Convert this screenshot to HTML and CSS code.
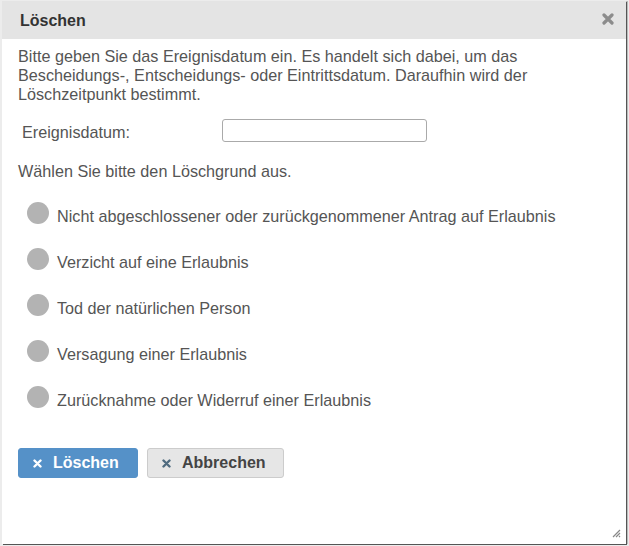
FILE: index.html
```html
<!DOCTYPE html>
<html lang="de">

<head>
    <meta charset="UTF-8">
    <meta name="viewport" content="width=device-width, initial-scale=1.0">
    <title>Löschen</title>
    <link rel="stylesheet" href="styles.css">
</head>

<body>
    <div class="dialog">
        <div class="dialog-header">
            <span class="dialog-title">Löschen</span>
            <svg class="dialog-close" width="12" height="12" viewBox="0 0 12 12">
                <path d="M2 2 L10 10 M10 2 L2 10" stroke="#8c8c8c" stroke-width="3.2" stroke-linecap="round" />
            </svg>
        </div>

        <div class="dialog-content">
            <p class="intro">Bitte geben Sie das Ereignisdatum ein. Es handelt sich dabei, um das Bescheidungs-, Entscheidungs- oder Eintrittsdatum. Daraufhin wird der Löschzeitpunkt bestimmt.</p>

            <div class="field">
                <label for="ereignisdatum">Ereignisdatum:</label>
                <input type="text" id="ereignisdatum">
            </div>

            <p class="hint">Wählen Sie bitte den Löschgrund aus.</p>

            <!-- Löschgründe -->
            <ul class="reasons">
                <li><span class="radio"></span>Nicht abgeschlossener oder zurückgenommener Antrag auf Erlaubnis</li>
                <li><span class="radio"></span>Verzicht auf eine Erlaubnis</li>
                <li><span class="radio"></span>Tod der natürlichen Person</li>
                <li><span class="radio"></span>Versagung einer Erlaubnis</li>
                <li><span class="radio"></span>Zurücknahme oder Widerruf einer Erlaubnis</li>
            </ul>

            <div class="buttons">
                <button class="btn btn-primary">
                    <svg class="icon" width="9" height="9" viewBox="0 0 9 9">
                        <path d="M1.5 1.5 L7.5 7.5 M7.5 1.5 L1.5 7.5" stroke="currentColor" stroke-width="2.4" stroke-linecap="round" />
                    </svg>Löschen
                </button>
                <button class="btn btn-default">
                    <svg class="icon" width="9" height="9" viewBox="0 0 9 9">
                        <path d="M1.5 1.5 L7.5 7.5 M7.5 1.5 L1.5 7.5" stroke="currentColor" stroke-width="2.4" stroke-linecap="round" />
                    </svg>Abbrechen
                </button>
            </div>
        </div>

        <svg class="grip" width="9" height="9" viewBox="0 0 9 9">
            <path d="M8 1 L1 8 M8 4 L4 8 M8 7 L7 8" stroke="#888" stroke-width="1.2" fill="none" />
        </svg>
    </div>
</body>

</html>
```

FILE: styles.css
```css
body {
    margin: 0;
    padding: 1px 0 0 2px;
    background: #ececec;
    font-family: 'Liberation Sans', Arial, sans-serif;
    height: 546px;
    box-sizing: border-box;
    overflow: hidden;
}

.dialog {
    position: relative;
    width: 624px;
    height: 543px;
    background: #fff;
    box-shadow: 1px 1px 0 #555, 2px 0 0 #bbb;
    display: flex;
    flex-direction: column;
}

.dialog-header {
    height: 38px;
    background: #e4e4e4;
    display: flex;
    align-items: center;
    justify-content: space-between;
    padding: 0 12px 0 18px;
}

.dialog-title {
    font-size: 16px;
    font-weight: bold;
    color: #333;
    margin-top: 1px;
}

.dialog-close {
    margin-top: -2px;
}

.dialog-content {
    padding: 8px 16px 0 16px;
    color: #555;
    font-size: 16.2px;
    line-height: 19px;
}

.intro {
    margin: 0;
}

.field {
    display: flex;
    align-items: center;
    margin-top: 19px;
    padding-left: 4px;
}

.field label {
    width: 200px;
}

.field input {
    width: 205px;
    height: 23px;
    box-sizing: border-box;
    border: 1px solid #aaa;
    border-radius: 3px;
    margin-top: -4px;
}

.hint {
    margin: 20px 0 0 0;
}

/* Radio Liste */
.reasons {
    list-style: none;
    margin: 12px 0 0 0;
    padding: 0;
}

.reasons li {
    display: flex;
    align-items: center;
    height: 46px;
    padding-left: 9px;
}

.radio {
    width: 22px;
    height: 22px;
    border-radius: 50%;
    background: #b3b3b3;
    margin-right: 8px;
    margin-top: -6px;
}

.buttons {
    display: flex;
    gap: 9px;
    margin-top: 25px;
}

.btn {
    font-family: 'Liberation Sans', Arial, sans-serif;
    font-size: 16px;
    font-weight: bold;
    height: 30px;
    border-radius: 3px;
    padding: 0 14px;
    cursor: pointer;
    display: flex;
    align-items: center;
}

.btn .icon {
    margin-right: 11px;
}

.btn-primary {
    background: #5591c8;
    border: 1px solid #5591c8;
    color: #fff;
    width: 120px;
}

.btn-default {
    background: #e6e6e6;
    border: 1px solid #ccc;
    color: #444;
    width: 137px;
}

.btn-default .icon {
    color: #4f6b7f;
}

.grip {
    position: absolute;
    right: 5px;
    bottom: 6px;
}
```
